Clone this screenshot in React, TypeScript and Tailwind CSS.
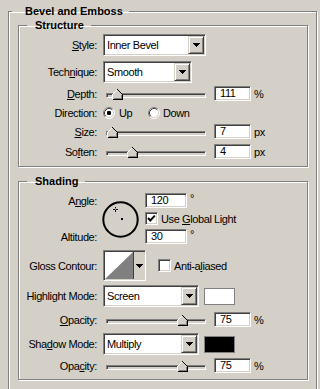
import React from "react";

const sunken =
  "border border-t-[#808080] border-l-[#808080] border-r-white border-b-white shadow-[inset_1px_1px_0_#404040,inset_-1px_-1px_0_#d4d0c8]";
const raised =
  "border border-t-[#d4d0c8] border-l-[#d4d0c8] border-r-[#404040] border-b-[#404040] shadow-[inset_1px_1px_0_#fff,inset_-1px_-1px_0_#808080]";
const groupBox = "border border-[#808080] shadow-[inset_1px_1px_0_#fff,1px_1px_0_#fff]";

function Arrow() {
  return (
    <svg width="7" height="4" viewBox="0 0 7 4" shapeRendering="crispEdges">
      <path d="M0 0h7v1H0zM1 1h5v1H1zM2 2h3v1H2zM3 3h1v1H3z" fill="#000" />
    </svg>
  );
}

function Select({ text, className }: { text: string; className: string }) {
  return (
    <div className={`${sunken} bg-white h-[22px] flex items-center p-[1px] ${className}`}>
      <span className="flex-1 pl-[2px] leading-[14px]">{text}</span>
      <div className={`${raised} bg-[#d4d0c8] w-[16px] h-[18px] flex items-center justify-center`}>
        <Arrow />
      </div>
    </div>
  );
}

function Field({ v, className }: { v: string; className: string }) {
  return (
    <div className={`${sunken} bg-white h-[15px] flex items-center pl-[5px] leading-[13px] ${className}`}>
      {v}
    </div>
  );
}

function Thumb() {
  return (
    <svg width="11" height="11" viewBox="0 0 11 11" shapeRendering="crispEdges">
      <polygon points="0.5,10.5 0.5,5.5 5.5,0.5 10.5,5.5 10.5,10.5" fill="#d4d0c8" />
      <polyline points="0.5,10 0.5,5.5 5.5,0.5" stroke="#fff" fill="none" />
      <polyline points="5.5,0.5 10.5,5.5 10.5,10.5 0.5,10.5" stroke="#000" fill="none" />
      <polyline points="9.5,6 9.5,9.5 1.5,9.5" stroke="#808080" fill="none" />
    </svg>
  );
}

function Slider({ pos }: { pos: number }) {
  return (
    <div className="relative w-[103px] h-[15px] shrink-0">
      <div className={`${sunken} absolute left-[3px] top-[7px] w-[100px] h-[5px] bg-[#d4d0c8]`} />
      <div className="absolute top-[3px]" style={{ left: pos }}>
        <Thumb />
      </div>
    </div>
  );
}

function Label({ children }: { children: React.ReactNode }) {
  return <div className="w-[78px] shrink-0 text-right whitespace-nowrap">{children}</div>;
}

function SliderRow({
  label,
  pos,
  value,
  unit,
  className,
}: {
  label: React.ReactNode;
  pos: number;
  value: string;
  unit: string;
  className: string;
}) {
  return (
    <div className={`flex items-center h-[15px] ${className}`}>
      <Label>{label}</Label>
      <div className="ml-[6px] flex items-center">
        <Slider pos={pos} />
        <Field v={value} className="w-[37px] ml-[8px]" />
        <span className="ml-[3px]">{unit}</span>
      </div>
    </div>
  );
}

function Radio({ checked }: { checked: boolean }) {
  return (
    <svg width="12" height="12" viewBox="0 0 12 12">
      <circle cx="6" cy="6" r="5" fill="#fff" />
      <path d="M2.11,9.89 A5.5,5.5 0 0 1 9.89,2.11" stroke="#808080" fill="none" />
      <path d="M9.89,2.11 A5.5,5.5 0 0 1 2.11,9.89" stroke="#fff" fill="none" />
      <path d="M2.82,9.18 A4.5,4.5 0 0 1 9.18,2.82" stroke="#404040" fill="none" />
      <path d="M9.18,2.82 A4.5,4.5 0 0 1 2.82,9.18" stroke="#d4d0c8" fill="none" />
      {checked && <rect x="4" y="4" width="4" height="4" rx="1.2" fill="#000" />}
    </svg>
  );
}

function Check({ checked }: { checked: boolean }) {
  return (
    <div className={`${sunken} bg-white w-[13px] h-[13px] shrink-0 relative`}>
      {checked && (
        <svg width="11" height="11" viewBox="0 0 11 11" className="absolute left-0 top-0">
          <polyline points="2,5 4.3,7.5 8.8,2.6" stroke="#000" strokeWidth="1.9" fill="none" />
        </svg>
      )}
    </div>
  );
}

function AngleDial() {
  return (
    <svg width="38" height="38" viewBox="0 0 38 38">
      <circle cx="18.5" cy="18.5" r="17.2" stroke="#000" strokeWidth="2" fill="none" />
      <rect x="19" y="17" width="2" height="2" fill="#000" />
      <path d="M13.5 5.5v5M11 8h5" stroke="#000" strokeWidth="1" shapeRendering="crispEdges" />
      <rect x="13" y="7.5" width="1" height="1" fill="#fff" />
    </svg>
  );
}

function GlossContour() {
  return (
    <div className={`${sunken} w-[43px] h-[31px] p-[1px] flex shrink-0`}>
      <svg width="28" height="27" viewBox="0 0 28 27" className="shrink-0">
        <rect x="0" y="0" width="28" height="27" fill="#fff" />
        <polygon points="0,27 28,0 28,27" fill="#808080" />
      </svg>
      <div className="flex-1 border-l border-[#404040] bg-[#d4d0c8] flex items-center justify-center">
        <Arrow />
      </div>
    </div>
  );
}

export default function App() {
  return (
    <div className="w-[320px] h-[389px] overflow-hidden bg-[#d4d0c8] pt-[4px] pl-[8px] text-black text-[11px] leading-[14px] tracking-[-0.4px] [font-family:'Liberation_Sans',Arial,sans-serif]">
      <fieldset className={`${groupBox} w-[309px] pb-[30px]`}>
        <legend className="ml-[3px] pl-[13px] pr-[6px] font-bold leading-[14px] tracking-normal">Bevel and Emboss</legend>
        <div className="pl-[9px]">
          <fieldset className={`${groupBox} w-[290px] pb-[7px]`}>
            <legend className="ml-[8px] pl-[8px] pr-[7px] font-bold leading-[14px] tracking-normal">Structure</legend>

            <div className="flex items-center h-[22px] mt-[2px]">
              <Label>
                <u>S</u>tyle:
              </Label>
              <Select text="Inner Bevel" className="w-[103px] ml-[6px]" />
            </div>

            <div className="flex items-center h-[22px] mt-[5px]">
              <Label>
                Tech<u>n</u>ique:
              </Label>
              <Select text="Smooth" className="w-[89px] ml-[6px]" />
            </div>

            <SliderRow
              className="mt-[3px]"
              label={
                <>
                  <u>D</u>epth:
                </>
              }
              pos={9}
              value="111"
              unit="%"
            />

            <div className="flex items-center h-[18px] mt-[3px]">
              <Label>Direction:</Label>
              <div className="ml-[6px] flex items-center w-[45px]">
                <Radio checked />
                <span className="ml-[4px]">Up</span>
              </div>
              <div className="flex items-center">
                <Radio checked={false} />
                <span className="ml-[3px]">Down</span>
              </div>
            </div>

            <SliderRow
              className="mt-[2px]"
              label={
                <>
                  <u>S</u>ize:
                </>
              }
              pos={4}
              value="7"
              unit="px"
            />

            <SliderRow
              className="mt-[5px]"
              label={
                <>
                  So<u>f</u>ten:
                </>
              }
              pos={24}
              value="4"
              unit="px"
            />
          </fieldset>

          <fieldset className={`${groupBox} w-[290px] mt-[7px] pb-[6px]`}>
            <legend className="ml-[8px] pl-[8px] pr-[7px] font-bold leading-[14px] tracking-normal">Shading</legend>

            <div className="flex mt-[5px]">
              <div className="w-[78px] shrink-0 h-[51px] flex flex-col justify-between text-right">
                <div className="h-[15px] flex items-center justify-end">
                  <span>
                    A<u>n</u>gle:
                  </span>
                </div>
                <div className="h-[15px] flex items-center justify-end">Altitude:</div>
              </div>
              <div className="ml-[5px] mt-[8px] shrink-0">
                <AngleDial />
              </div>
              <div className="ml-[5px] flex flex-col">
                <div className="flex h-[15px]">
                  <Field v="120" className="w-[42px]" />
                  <span className="ml-[3px] leading-[10px]">°</span>
                </div>
                <div className="flex items-center h-[21px]">
                  <Check checked />
                  <span className="ml-[3px]">
                    Use <u>G</u>lobal Light
                  </span>
                </div>
                <div className="flex h-[15px]">
                  <Field v="30" className="w-[42px]" />
                  <span className="ml-[3px] leading-[10px]">°</span>
                </div>
              </div>
            </div>

            <div className="flex items-center h-[31px] mt-[6px]">
              <Label>Gloss Contour:</Label>
              <div className="ml-[6px] flex items-center">
                <GlossContour />
                <div className="ml-[12px]">
                  <Check checked={false} />
                </div>
                <span className="ml-[3px]">
                  Anti-a<u>l</u>iased
                </span>
              </div>
            </div>

            <div className="flex items-center h-[22px] mt-[4px]">
              <Label>
                Hi<u>g</u>hlight Mode:
              </Label>
              <Select text="Screen" className="w-[96px] ml-[6px]" />
              <div className="ml-[5px] w-[31px] h-[17px] border border-[#808080] bg-white" />
            </div>

            <SliderRow
              className="mt-[5px]"
              label={
                <>
                  <u>O</u>pacity:
                </>
              }
              pos={74}
              value="75"
              unit="%"
            />

            <div className="flex items-center h-[22px] mt-[6px]">
              <Label>
                Sha<u>d</u>ow Mode:
              </Label>
              <Select text="Multiply" className="w-[96px] ml-[6px]" />
              <div className="ml-[5px] w-[31px] h-[17px] border border-[#808080] bg-black" />
            </div>

            <SliderRow
              className="mt-[3px]"
              label={
                <>
                  Opa<u>c</u>ity:
                </>
              }
              pos={74}
              value="75"
              unit="%"
            />
          </fieldset>
        </div>
      </fieldset>
    </div>
  );
}
